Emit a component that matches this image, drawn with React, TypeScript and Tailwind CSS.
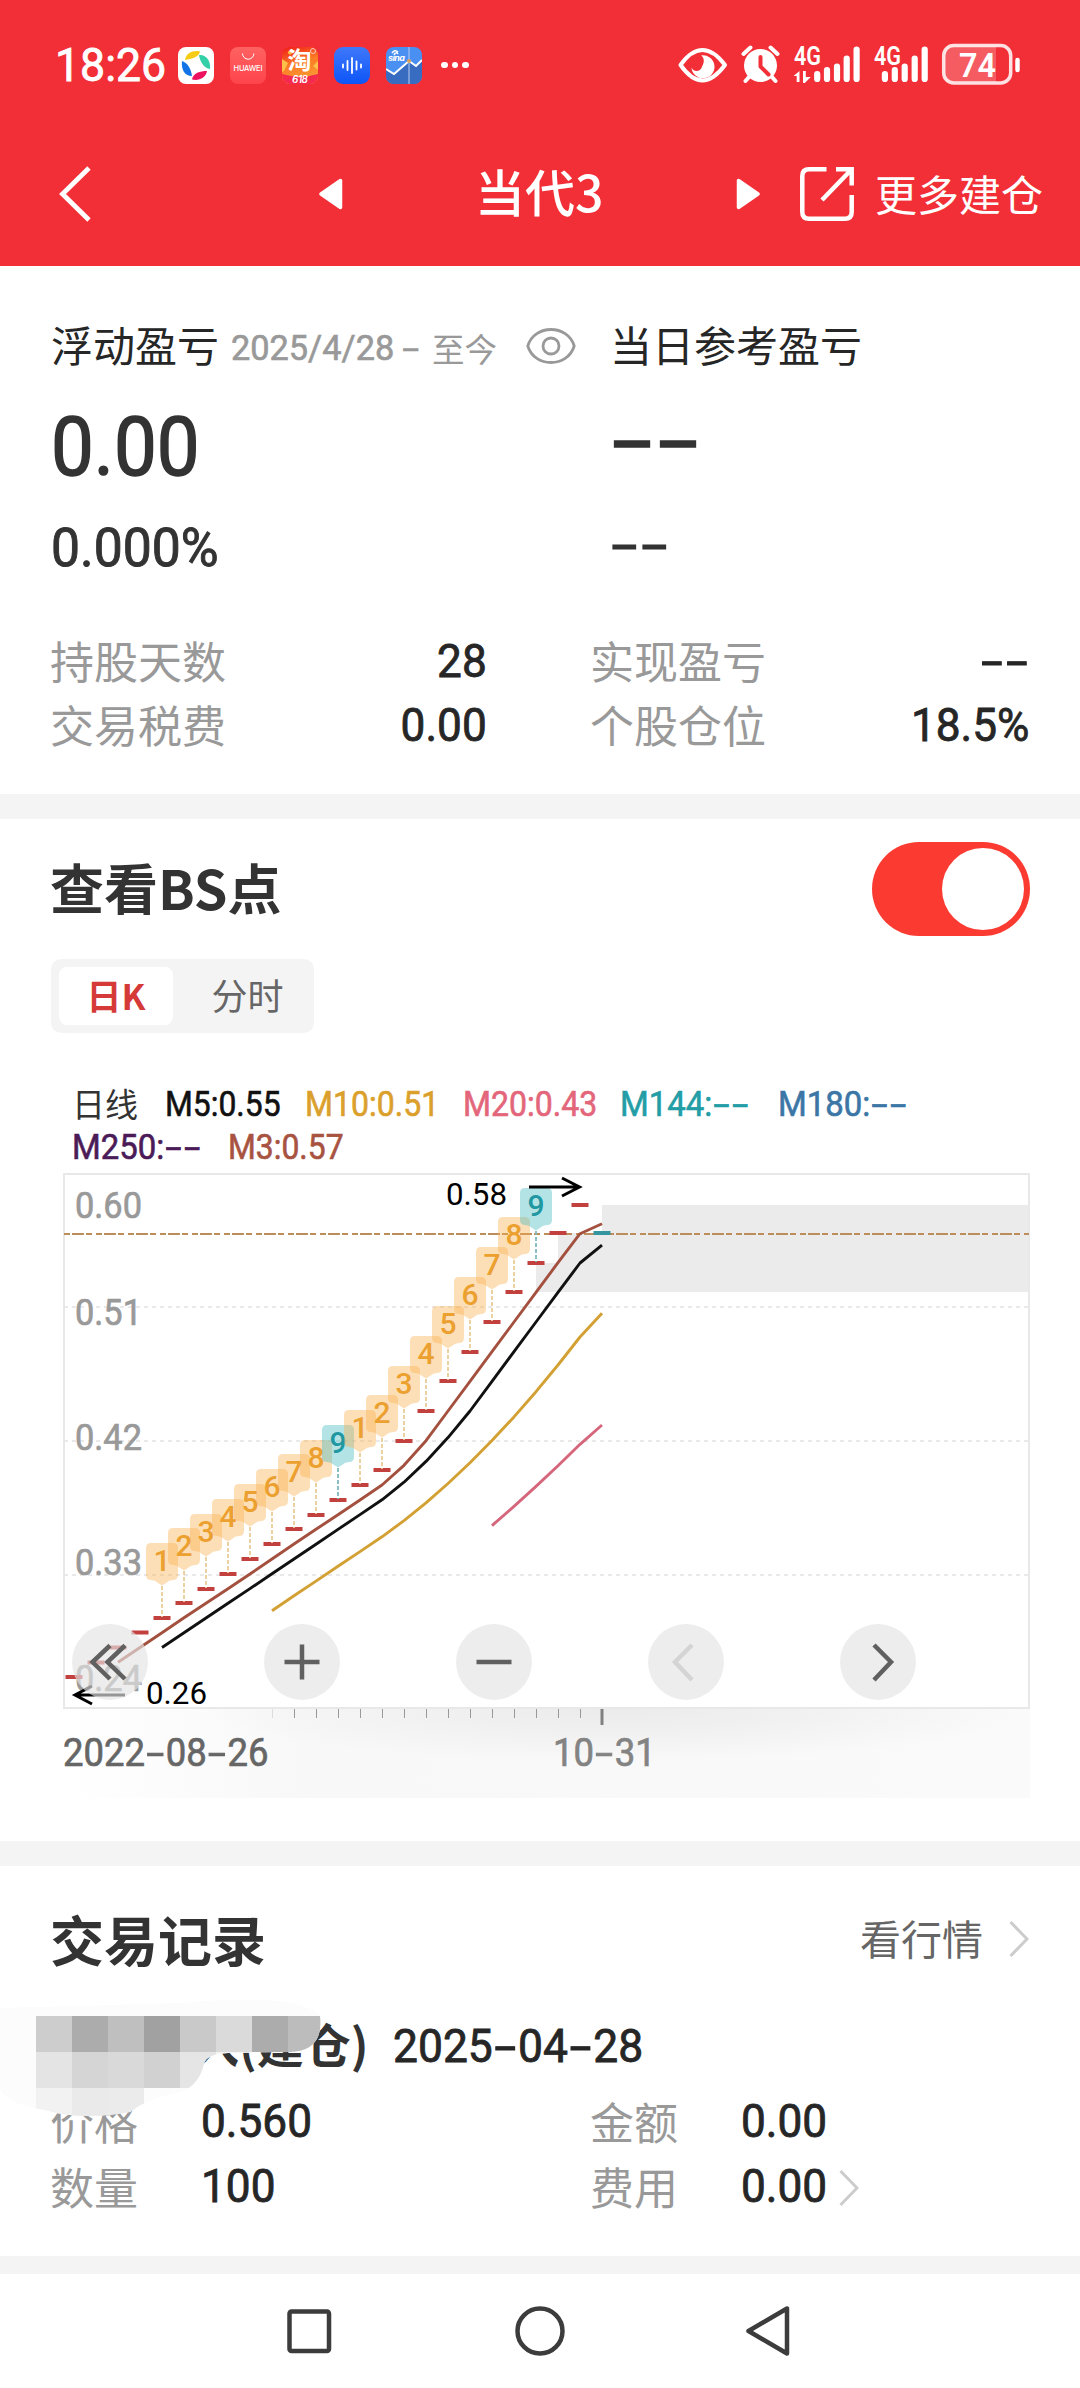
import { ReactNode } from "react";

const closes = [
  1677, 1662.5, 1647.5, 1632.5, 1618, 1603, 1589, 1574, 1559, 1544, 1529, 1515,
  1500, 1485, 1470, 1441, 1411, 1381, 1352, 1322, 1292, 1263, 1233, 1205, 1233,
];
const colX = (i: number) => 74 + i * 22;

const marks = [1, 2, 3, 4, 5, 6, 7, 8, 9, 1, 2, 3, 4, 5, 6, 7, 8, 9];

function average(n: number) {
  const points: string[] = [];
  for (let i = n - 1; i < closes.length; i++) {
    const sum = closes.slice(i - n + 1, i + 1).reduce((a, b) => a + b, 0);
    points.push(`${colX(i)},${(sum / n).toFixed(1)}`);
  }
  return points.join(" ");
}

// digits with wide dashes
function Num({ children, className = "" }: { children: string; className?: string }) {
  return (
    <span
      className={`inline-block whitespace-nowrap leading-none font-[Roboto,sans-serif] [-webkit-text-stroke:0.018em_currentColor] ${className}`}
    >
      {children.split("").map((c, i) =>
        c === "-" ? (
          <span key={i} className="inline-block w-[0.57em] text-center">
            <span className="inline-block scale-x-[1.75]">-</span>
          </span>
        ) : (
          c
        )
      )}
    </span>
  );
}

function StatusBar() {
  return (
    <div className="flex h-[130px] items-center text-white">
      <Num className="ml-[55px] w-[123px] origin-left scale-x-[0.97] text-[46px]">
        18:26
      </Num>
      <div className="flex gap-4">
        <svg width="36" height="37" viewBox="0 0 36 37">
          <rect width="36" height="37" rx="8" fill="#fff" />
          <path d="M7 13C8 6 15 3 22 4.500C21 10 14 12 7 13Z" fill="#f7cc16" />
          <path d="M21 8C28 7 33 14 32 22C26 21 22 15 21 8Z" fill="#33cfa6" />
          <path d="M29 24C28 31 21 34 14 32.500C15 26 22 24 29 24Z" fill="#ec1260" />
          <path d="M4 14C10 16 13 22 14 29C7 29 3 23 4 14Z" fill="#1273e6" />
        </svg>
        <svg width="36" height="37" viewBox="0 0 36 37">
          <defs>
            <linearGradient id="hw" x1="0" y1="0" x2="0" y2="1">
              <stop offset="0" stopColor="#ff6262" />
              <stop offset="1" stopColor="#fd444b" />
            </linearGradient>
          </defs>
          <rect width="36" height="37" rx="8" fill="url(#hw)" />
          <path d="M12.500 6.500a5.700 5.700 0 0 0 11.400 0" fill="none" stroke="#fff" strokeWidth="1" />
          <text
            x="3.500"
            y="24"
            textLength="29"
            fontSize="7.500"
            fontWeight="500"
            fill="#fff"
            className="font-[Inter,sans-serif]"
          >
            HUAWEI
          </text>
        </svg>
        <svg className="overflow-visible" width="36" height="37" viewBox="0 0 36 37">
          <defs>
            <clipPath id="tb">
              <rect width="36" height="37" rx="8" />
            </clipPath>
            <linearGradient id="tbg" x1="0" y1="0" x2="0.300" y2="1">
              <stop offset="0" stopColor="#f01818" />
              <stop offset="0.500" stopColor="#fb7a25" />
              <stop offset="1" stopColor="#fb9a35" />
            </linearGradient>
          </defs>
          <g clipPath="url(#tb)">
            <rect width="36" height="37" fill="url(#tbg)" />
            <path d="M0 12l6 4-4 8-2 1zM36 14l-5 5 5 4z" fill="#ffc04a" />
            <circle cx="8" cy="5.500" r="2" fill="#ffc04a" />
            <path d="M0 27q18 5 36 0v10H0z" fill="#f52a4c" />
            <circle cx="31" cy="4" r="2.500" fill="none" stroke="#ffc9c0" strokeWidth="1" />
          </g>
          <text
            x="5.500"
            y="22"
            fontSize="24"
            fontWeight="700"
            fill="#fff"
            className="font-['Noto_Sans_CJK_SC',sans-serif]"
          >
            淘
          </text>
          <text
            x="10"
            y="36"
            fontSize="10"
            fontStyle="italic"
            fontWeight="600"
            fill="#fff"
            className="font-[Inter,sans-serif]"
            textLength="16"
          >
            618
          </text>
        </svg>
        <svg width="36" height="37" viewBox="0 0 36 37">
          <defs>
            <linearGradient id="vo" x1="0" y1="0" x2="0" y2="1">
              <stop offset="0" stopColor="#3f78fb" />
              <stop offset="1" stopColor="#0d55f8" />
            </linearGradient>
          </defs>
          <rect width="36" height="37" rx="9" fill="url(#vo)" />
          <path
            d="M9 17.500v3M13.500 14v9M18 11v15M22.500 14.500v8M27 17.500v3"
            stroke="#fff"
            strokeWidth="1.800"
            strokeLinecap="round"
          />
        </svg>
        <svg width="36" height="37" viewBox="0 0 36 37">
          <defs>
            <clipPath id="sn">
              <rect width="36" height="37" rx="8" />
            </clipPath>
          </defs>
          <g clipPath="url(#sn)">
            <rect width="36" height="37" fill="#4a8ff2" />
            <path d="M0 22l8 5 15-13 7 5 6-6v24H0z" fill="#386cc0" />
            <path d="M0 22l8 5 15-13 7 5 6-6" fill="none" stroke="#fff" strokeWidth="2" />
            <path d="M23 0v37" stroke="#b7cdf0" strokeWidth="1" />
            <circle cx="23" cy="14" r="2" fill="#d9a05b" />
            <text
              x="2"
              y="14"
              fontSize="9"
              fontStyle="italic"
              fontWeight="700"
              fill="#fff"
              className="font-[Inter,sans-serif]"
              textLength="17"
            >
              sina
            </text>
            <path d="M6 6q3-4 6-1M8 7.500q2-3 4-.5" fill="none" stroke="#fff" strokeWidth="1.500" />
          </g>
        </svg>
      </div>
      <div className="ml-[19px] flex gap-1">
        <span className="size-[6.500px] rounded-full bg-white" />
        <span className="size-[6.500px] rounded-full bg-white" />
        <span className="size-[6.500px] rounded-full bg-white" />
      </div>
      <svg className="ml-[206px]" width="350" height="44" viewBox="676 43 350 44">
        <path
          d="M681.500 65C690 53 697 50 703.500 50S717 53 726 65C717 77 710 80.500 703.500 80.500S690 77 681.500 65Z"
          fill="none"
          stroke="#fff"
          strokeWidth="4"
          strokeLinejoin="round"
        />
        <path
          d="M702 55.500A11.500 11.500 0 1 1 692.500 67.500A5.500 5.500 0 0 0 703 66.500C706 62 705 57 702 55.500Z"
          fill="#fff"
        />
        <circle cx="761.500" cy="65.500" r="16.500" fill="#fff" />
        <path
          d="M744.500 54l7-6.500M778.500 54l-7-6.500M750 77l-3.500 4M773 77l3.500 4"
          stroke="#fff"
          strokeWidth="4"
          strokeLinecap="round"
        />
        <path
          d="M761.500 57v9.500l8 8"
          fill="none"
          stroke="#f22f37"
          strokeWidth="4"
          strokeLinecap="round"
          strokeLinejoin="round"
        />
        <g fill="#fff" fontSize="25" fontWeight="600" className="font-[Roboto,sans-serif]">
          <text x="795" y="65" textLength="27" lengthAdjust="spacingAndGlyphs">
            4G
          </text>
          <text x="875" y="65" textLength="27" lengthAdjust="spacingAndGlyphs">
            4G
          </text>
        </g>
        <path d="M794.500 76l6-5v11h-2.800v-6zM804 71h2.800v6h5l-6 6h-1.800z" fill="#fff" />
        <path
          d="M818.200 74v5M828 70v9M838 66.500v12.500M847.700 58.500v20.500M857.600 49.500v29.500M885.900 74v5M895.800 70v9M905.700 66.500v12.500M915.700 58.500v20.500M925.700 49.500v29.500"
          stroke="#fff"
          strokeWidth="6.200"
          strokeLinecap="round"
        />
        <path d="M953 46h44v36h-44q-8 0-8-8v-20q0-8 8-8z" fill="#fff" fillOpacity="0.220" />
        <rect
          x="944.700"
          y="45.500"
          width="67"
          height="37.500"
          rx="10"
          fill="none"
          stroke="#fff"
          strokeOpacity="0.850"
          strokeWidth="3.500"
        />
        <path d="M1018.500 60v10" stroke="#fff" strokeWidth="4.500" strokeLinecap="round" />
        <text
          x="960"
          y="76.500"
          fontSize="34"
          fontWeight="600"
          fill="#fff"
          textLength="37"
          lengthAdjust="spacingAndGlyphs"
          className="font-[Roboto,sans-serif]"
        >
          74
        </text>
      </svg>
    </div>
  );
}

function Header() {
  return (
    <div className="flex h-[128px] items-center text-white">
      <svg className="ml-[58px]" width="34" height="58" viewBox="0 0 34 58">
        <path d="M31 3L4.500 29L31 55" fill="none" stroke="#fff" strokeWidth="4.800" />
      </svg>
      <svg className="ml-[227px]" width="24" height="32" viewBox="0 0 24 32">
        <path
          d="M2 16L21.500 2.500V29.500Z"
          fill="#fff"
          stroke="#fff"
          strokeWidth="3.500"
          strokeLinejoin="round"
        />
      </svg>
      <h1 className="ml-[132px] w-[261px] pb-2 text-[50px] leading-none font-medium">当代3</h1>
      <svg width="24" height="32" viewBox="0 0 24 32">
        <path
          d="M22 16L2.500 2.500V29.500Z"
          fill="#fff"
          stroke="#fff"
          strokeWidth="3.500"
          strokeLinejoin="round"
        />
      </svg>
      <svg className="ml-10" width="54" height="56" viewBox="0 0 54 56">
        <g fill="none" stroke="#fff" strokeWidth="4.500">
          <path d="M26.500 3.200H9Q2.300 3.200 2.300 10V46Q2.300 52.700 9 52.700H45Q51.700 52.700 51.700 46V29" />
          <path d="M36 3.200H51.700V19.500M51 4L22 34" />
        </g>
      </svg>
      <span className="ml-[21px] pb-0.5 text-[42px] leading-none">更多建仓</span>
    </div>
  );
}

function Stat({ label, children }: { label: string; children: string }) {
  return (
    <div className="flex h-16 items-center justify-between">
      <span className="-ml-px pb-1.5 text-[44px] leading-none text-[#999]">{label}</span>
      <Num className="mb-1 origin-right scale-x-[0.96] text-[46px] text-[#262626]">{children}</Num>
    </div>
  );
}

function Summary() {
  return (
    <section className="h-[528px] px-[51px] pt-[50px]">
      <div className="flex h-[60px] items-center">
        <div className="flex w-[559px] items-center">
          <span className="pb-1 text-[42px] leading-none text-[#262626]">浮动盈亏</span>
          <span className="ml-[12px] flex w-[283px] items-center pt-1 text-[#999]">
            <Num className="w-[170px] origin-left scale-x-[0.98] text-[35px]">2025/4/28</Num>
            <Num className="w-[31px] text-[34px]">-</Num>
            <span className="text-[32.500px] leading-none whitespace-nowrap">至今</span>
          </span>
          <svg className="ml-3" width="50" height="38" viewBox="0 0 50 38">
            <g fill="none" stroke="#999" strokeWidth="2.800">
              <path d="M1.800 19C5 8 15 2.500 25 2.500S45 8 48.200 19C45 30 35 35.500 25 35.500S5 30 1.800 19Z" />
              <circle cx="25" cy="19" r="8" />
            </g>
          </svg>
        </div>
        <span className="pb-1 text-[42px] leading-none text-[#262626]">当日参考盈亏</span>
      </div>
      <div className="flex h-[142px] items-center text-[#333]">
        <div className="w-[558px]">
          <Num className="origin-left scale-x-[0.93] text-[82px]">0.00</Num>
        </div>
        <Num className="mb-3 text-[81px]">--</Num>
      </div>
      <div className="flex h-[60px] items-center text-[#333]">
        <div className="w-[558px]">
          <Num className="origin-left scale-x-[0.975] text-[53px]">0.000%</Num>
        </div>
        <Num className="mb-1.5 text-[53px]">--</Num>
      </div>
      <div className="mt-[53px] grid grid-cols-[436px_438px] gap-x-[104px]">
        <Stat label="持股天数">28</Stat>
        <Stat label="实现盈亏">--</Stat>
        <Stat label="交易税费">0.00</Stat>
        <Stat label="个股仓位">18.5%</Stat>
      </div>
    </section>
  );
}

function Legend() {
  return (
    <div className="mt-[50px] ml-[21px] text-[35px]">
      <div className="flex h-[43px] items-center">
        <span className="w-[93px] pb-0.5 text-[33px] leading-none text-[#333]">日线</span>
        <Num className="w-[140px] origin-left scale-x-[0.91] text-[#111]">M5:0.55</Num>
        <Num className="w-[158px] origin-left scale-x-[0.915] text-[#dba02c]">M10:0.51</Num>
        <Num className="w-[157px] origin-left scale-x-[0.915] text-[#e3667b]">M20:0.43</Num>
        <Num className="w-[158px] origin-left scale-x-[0.94] text-[#239da6]">M144:--</Num>
        <Num className="origin-left scale-x-[0.94] text-[#3b76a6]">M180:--</Num>
      </div>
      <div className="flex h-[43px] items-center">
        <Num className="w-[156px] origin-left scale-x-[0.94] text-[#4b1b58]">M250:--</Num>
        <Num className="origin-left scale-x-[0.91] text-[#a85341]">M3:0.57</Num>
      </div>
    </div>
  );
}

function RoundButton({ children }: { children: ReactNode }) {
  return (
    <button className="size-[76px] rounded-full bg-[rgba(227,227,227,0.66)]">
      <svg width="76" height="76" viewBox="0 0 76 76" fill="none" stroke="#606060" strokeWidth="4.500">
        {children}
      </svg>
    </button>
  );
}

function Chart() {
  return (
    <div className="relative mt-1 ml-3 w-[967px]">
      <svg className="relative z-10 block overflow-visible" width="967" height="536" viewBox="63 1173 967 536">
        <path d="M602 1205H1030V1292H536V1263H558V1233H602Z" fill="#ebebeb" />
        <g stroke="#e9e9e9" strokeWidth="2" strokeDasharray="4 4">
          <path d="M64 1307H1029M64 1441H1029M64 1575H1029" />
        </g>
        <rect x="64" y="1174" width="965" height="534" fill="none" stroke="#e8e8e8" strokeWidth="2" />

        <g fill="#999" stroke="#999" strokeWidth="0.700" fontSize="37.500" className="font-[Roboto,sans-serif]">
          <text x="75" y="1218" textLength="67" lengthAdjust="spacingAndGlyphs">0.60</text>
          <text x="75" y="1325" textLength="67" lengthAdjust="spacingAndGlyphs">0.51</text>
          <text x="75" y="1450" textLength="67" lengthAdjust="spacingAndGlyphs">0.42</text>
          <text x="75" y="1575" textLength="67" lengthAdjust="spacingAndGlyphs">0.33</text>
          <text x="75" y="1691" textLength="67" lengthAdjust="spacingAndGlyphs">0.24</text>
        </g>

        <path d="M64 1234H1029" stroke="#bd8e5c" strokeWidth="1.800" strokeDasharray="6 2 12 2 6 4" />

        {closes.map((y, i) => (
          <rect
            key={i}
            x={colX(i) - 8.5}
            y={y - 2}
            width="17"
            height="4"
            fill={i === 24 ? "#3696a0" : "#c2403e"}
          />
        ))}

        <g fill="none" strokeWidth="2.900" strokeLinejoin="round">
          <polyline points={average(3)} stroke="#a4503f" />
          <polyline points={average(5)} stroke="#111" />
          <polyline points={average(10)} stroke="#d3a033" />
          <polyline points={average(20)} stroke="#d5667c" />
        </g>

        {marks.map((n, k) => {
          const x = colX(k + 4);
          const y = closes[k + 4];
          const nine = n === 9;
          return (
            <g key={k}>
              <path
                d={`M${x} ${y - 32}V${y - 1}`}
                stroke={nine ? "#7fb9bd" : "#e8cd95"}
                strokeWidth="1.800"
                strokeDasharray="4 2"
              />
              <path
                d={`M${x - 11} ${y - 75}h22q5 0 5 5v27q0 5-5 5q-4 0-7 3l-4 2.500l-4-2.500q-3-3-7-3q-5 0-5-5v-27q0-5 5-5z`}
                fill={nine ? "#4dbdc4" : "#fbb04c"}
                fillOpacity={nine ? 0.42 : 0.4}
              />
              <text
                x={x}
                y={y - 47}
                textAnchor="middle"
                fontSize="30"
                fontWeight="500"
                fill={nine ? "#1f98a2" : "#eba02f"}
                className="font-[Roboto,sans-serif]"
              >
                {n}
              </text>
            </g>
          );
        })}

        <g fill="#000" fontSize="32" className="font-[Roboto,sans-serif]">
          <text x="446" y="1205" textLength="61" lengthAdjust="spacingAndGlyphs">0.58</text>
          <text x="146" y="1704" textLength="61" lengthAdjust="spacingAndGlyphs">0.26</text>
        </g>
        <g fill="none" stroke="#000" strokeWidth="3">
          <path d="M529 1187H579M562 1178L579.500 1187L562 1196" />
          <path d="M125 1695H76M92 1686L75 1695L92 1704" />
        </g>
      </svg>

      <div className="relative h-[89px] bg-linear-to-r from-white via-[#f8f8f8] via-25% to-[#fafafa]">
        <div className="absolute inset-0 bg-[radial-gradient(ellipse_42%_60%_at_57%_0%,#ebebeb_0%,#f0f0f0_40%,transparent_100%)]" />
        <svg className="absolute top-0 left-0" width="967" height="18" viewBox="63 0 967 18">
          <path d="M272.500 0V9" stroke="#ddd" />
          {Array.from({ length: 14 }, (_, i) => (
            <path key={i} d={`M${colX(i + 10) + 0.5} 0V9`} stroke="#999" />
          ))}
          <path d="M602 0V16" stroke="#808080" strokeWidth="3" />
        </svg>
        <div className="relative flex pt-[25px]">
          <Num className="w-[490px] origin-left scale-x-[0.96] text-[38px] text-[#666]">2022-08-26</Num>
          <Num className="origin-left scale-x-[0.96] text-[38px] text-[#838383]">10-31</Num>
        </div>
      </div>

      <div className="absolute top-[451px] left-[9px] z-20 flex gap-[116px]">
        <RoundButton>
          <path d="M38 21.500L20.500 38L38 55M53 21.500L35.500 38L53 55" />
        </RoundButton>
        <RoundButton>
          <path d="M20.500 38H55.500M38 20.500V55.500" />
        </RoundButton>
        <RoundButton>
          <path d="M20.500 38H55.500" />
        </RoundButton>
        <RoundButton>
          <path d="M44 21L27 38L44 56" stroke="#d4d4d4" />
        </RoundButton>
        <RoundButton>
          <path d="M34 21L51 38L34 56" />
        </RoundButton>
      </div>
    </div>
  );
}

function BsPoints() {
  return (
    <section className="h-[1022px] px-[51px] pt-[23px]">
      <div className="flex h-[94px] items-center justify-between">
        <h2 className="-ml-px pb-1 text-[54px] leading-none font-bold text-[#333]">查看BS点</h2>
        <div className="-mr-px flex h-[94px] w-[158px] items-center justify-end rounded-full bg-[#fb3b32] pr-1.5">
          <div className="size-[82px] rounded-full bg-white" />
        </div>
      </div>
      <div className="mt-[23px] flex h-[74px] w-[263px] rounded-[10px] bg-[#f4f4f4] p-2">
        <div className="flex w-[114px] items-center justify-center rounded-lg bg-white pb-1 text-[35px] leading-none font-bold text-[#d63a38]">
          日K
        </div>
        <div className="flex flex-1 items-center justify-center pb-1 pl-4 text-[36px] leading-none text-[#666]">
          分时
        </div>
      </div>
      <Legend />
      <Chart />
    </section>
  );
}

const tiles = [
  ["#cdcdcd", "#acacac", "#bfbfbf", "#a1a1a1", "#c9c9c9", "#dadada", "#acacac", "#bcbcbc"],
  ["#e4e4e4", "#d5d5d5", "#d9d9d9", "#d1d1d1", "#e5e5e5", "#f4f4f4"],
  ["#f2f2f2", "#eaeaea", "#ebebeb"],
];

function Mosaic() {
  return (
    <svg className="absolute top-[134px] left-0" width="325" height="118" viewBox="0 2000 325 118">
      <defs>
        <clipPath id="brush">
          <path d="M0 2008L180 2003Q300 1992 320 2016Q324 2051 290 2052L228 2053Q206 2054 204 2064Q198 2090 172 2094Q145 2100 130 2112Q80 2121 45 2110Q10 2105 0 2090Z" />
        </clipPath>
      </defs>
      <g clipPath="url(#brush)">
        <rect y="2000" width="325" height="118" fill="#fcfcfc" />
        {tiles.map((row, r) =>
          row.map((fill, c) => (
            <rect key={`${r}-${c}`} x={36 + c * 36} y={2016 + r * 36} width="36" height="36" fill={fill} />
          ))
        )}
      </g>
    </svg>
  );
}

function Records() {
  return (
    <section className="relative h-[390px] px-[51px] pt-9">
      <div className="flex h-20 items-center justify-between">
        <h2 className="-ml-px pb-1.5 text-[54px] leading-none font-bold text-[#333]">交易记录</h2>
        <div className="flex items-center pb-1.5">
          <span className="pb-1 text-[41px] leading-none text-[#666]">看行情</span>
          <svg className="ml-[26px]" width="20" height="38" viewBox="0 0 20 38">
            <path d="M1.500 2L18 19L1.500 36" fill="none" stroke="#ccc" strokeWidth="3" />
          </svg>
        </div>
      </div>
      <div className="mt-6 flex h-20 items-center">
        <span className="w-[342px] pb-2 text-[47px] leading-none font-bold whitespace-nowrap text-[#333]">
          证券买入(建仓)
        </span>
        <Num className="origin-left scale-x-[0.965] text-[46px] text-[#262626]">2025-04-28</Num>
      </div>
      <div className="mt-1 grid grid-cols-[150px_390px_150px_1fr] auto-rows-[65px] items-center text-[44px] leading-none text-[#999]">
        <span className="-ml-px pb-1">价格</span>
        <Num className="mb-1 origin-left scale-x-[0.96] text-[46px] text-[#262626]">0.560</Num>
        <span className="-ml-px pb-1">金额</span>
        <Num className="mb-1 origin-left scale-x-[0.96] text-[46px] text-[#262626]">0.00</Num>
        <span className="-ml-px pb-1">数量</span>
        <Num className="mb-1 origin-left scale-x-[0.96] text-[46px] text-[#262626]">100</Num>
        <span className="-ml-px pb-1">费用</span>
        <div className="flex items-center">
          <Num className="mb-1 w-[98px] origin-left scale-x-[0.96] text-[46px] text-[#262626]">0.00</Num>
          <svg width="20" height="38" viewBox="0 0 20 38">
            <path d="M1.500 2L18 19L1.500 36" fill="none" stroke="#ccc" strokeWidth="3" />
          </svg>
        </div>
      </div>
      <Mosaic />
    </section>
  );
}

function NavBar() {
  return (
    <nav className="flex h-[114px] items-center">
      <svg className="ml-[286px]" width="46" height="46" viewBox="0 0 46 46">
        <rect x="3.500" y="3.500" width="39.500" height="39.500" rx="2" fill="none" stroke="#3c3c3c" strokeWidth="4.500" />
      </svg>
      <svg className="ml-[183px]" width="50" height="50" viewBox="0 0 50 50">
        <circle cx="25" cy="25" r="22.500" fill="none" stroke="#3c3c3c" strokeWidth="4.500" />
      </svg>
      <svg className="ml-[179px]" width="48" height="52" viewBox="0 0 48 52">
        <path d="M4.500 26L43 3.500V48.500Z" fill="none" stroke="#3c3c3c" strokeWidth="4.500" strokeLinejoin="round" />
      </svg>
    </nav>
  );
}

export default function App() {
  return (
    <div className="h-[2388px] w-[1080px] overflow-hidden bg-white font-['Noto_Sans_CJK_SC',sans-serif]">
      <header className="h-[266px] bg-[#f22f37]">
        <StatusBar />
        <Header />
      </header>
      <Summary />
      <div className="h-[25px] bg-[#f4f4f4]" />
      <BsPoints />
      <div className="h-[25px] bg-[#f4f4f4]" />
      <Records />
      <div className="h-[18px] bg-[#f4f4f4]" />
      <NavBar />
    </div>
  );
}
